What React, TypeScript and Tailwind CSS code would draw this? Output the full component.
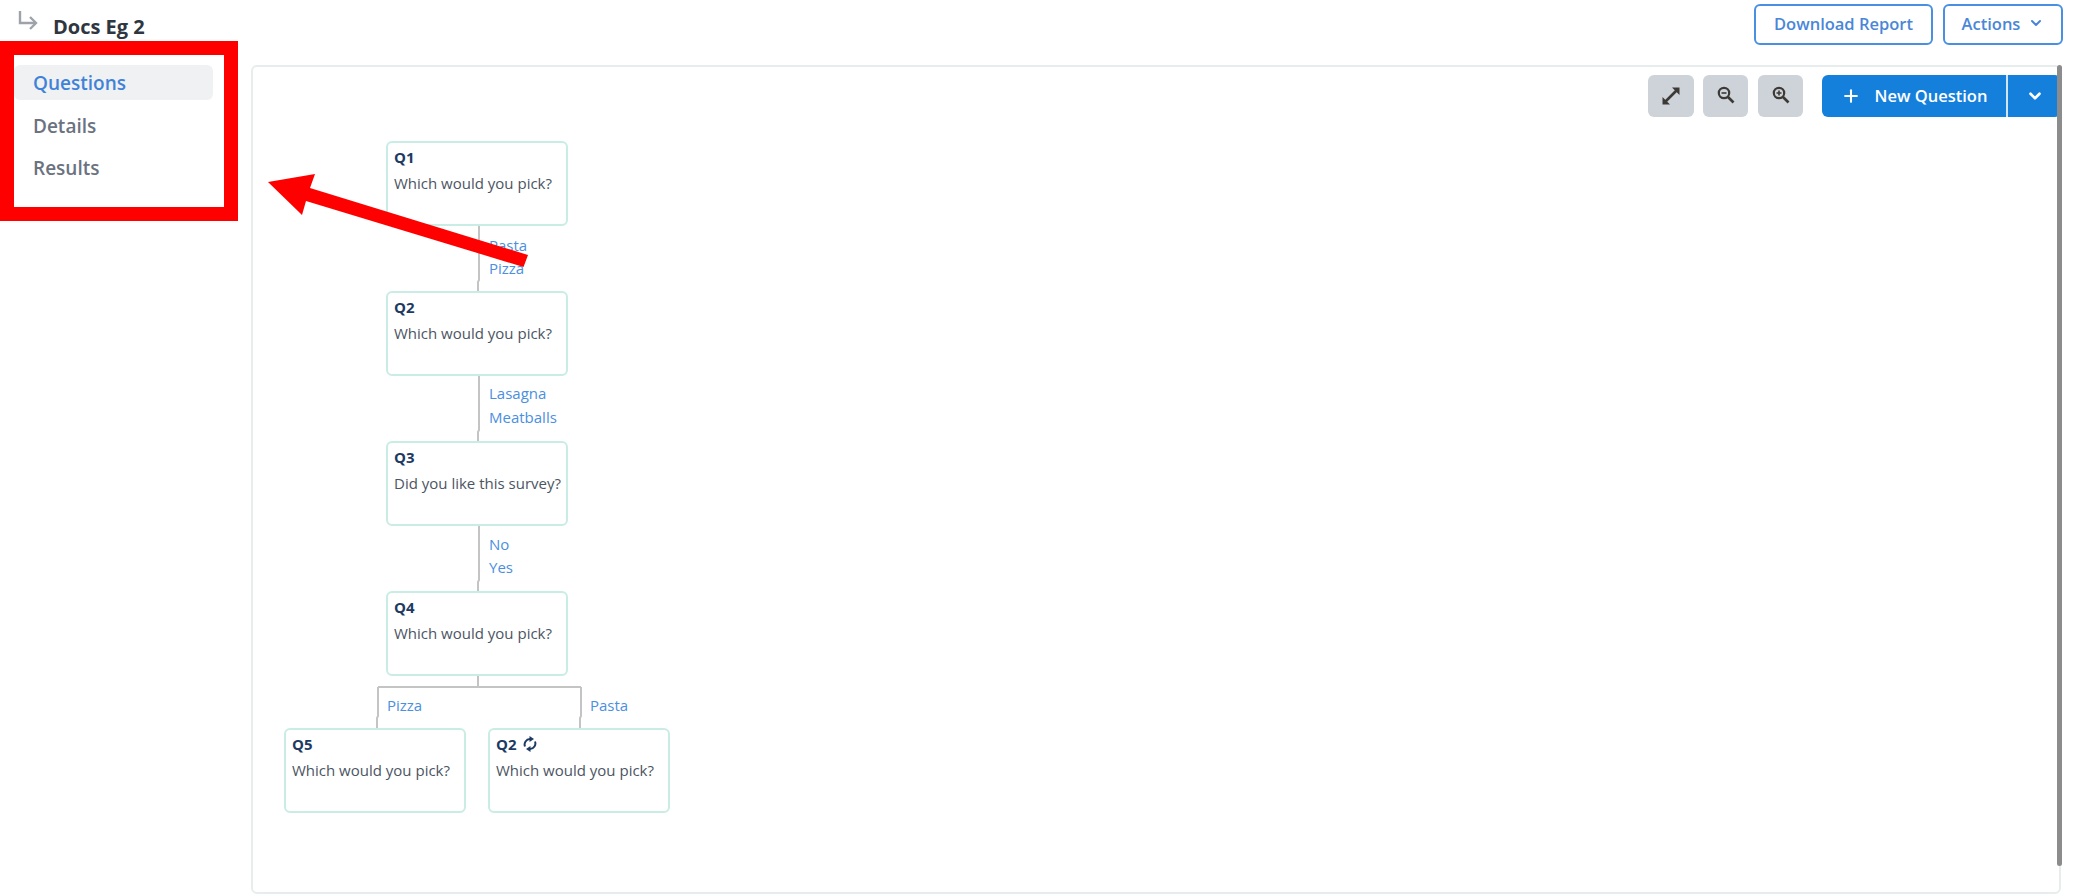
import { ChevronDown, Plus } from 'lucide-react';

type NodeProps = {
  label: string;
  text: string;
  className: string;
  loop?: boolean;
};

const FlowNode = ({ label, text, className, loop }: NodeProps) => (
  <div className={`absolute w-[182px] h-[85px] bg-white border-2 border-[#c9ece4] rounded-md pl-[6px] pt-[2px] ${className}`}>
    <div className="flex items-center gap-[6px] text-[15px] leading-[24px] font-bold text-[#1d3a63]">
      {label}
      {loop && (
        <svg viewBox="0 0 14 16" className="w-[14px] h-[16px]" fill="none" stroke="#1d3a63" strokeWidth="2">
          <path d="M2 10.5a5.5 5.5 0 0 1 5-7.5" />
          <path d="M12 5.5a5.5 5.5 0 0 1-5 7.5" />
          <path d="M6.5 0l4.5 3-4.5 3z" fill="#1d3a63" stroke="none" />
          <path d="M7.5 10l-4.5 3 4.5 3z" fill="#1d3a63" stroke="none" />
        </svg>
      )}
    </div>
    <div className="mt-[3px] text-[15px] leading-[22px] text-[#4b5563] whitespace-nowrap">{text}</div>
  </div>
);

const EdgeLabel = ({ text, className }: { text: string; className: string }) => (
  <span className={`absolute text-[15px] leading-[20px] text-[#4a8fe0] ${className}`}>{text}</span>
);

const ZoomIcon = ({ plus }: { plus?: boolean }) => (
  <svg viewBox="0 0 18 18" className="w-[18px] h-[18px] mb-[3px]" fill="none" stroke="#3d3a36">
    <circle cx="7" cy="7" r="5.2" strokeWidth="2.2" />
    <path d="M11 11l5.5 5.5" strokeWidth="2.6" />
    <path d={plus ? 'M4.5 7h5M7 4.5v5' : 'M4.5 7h5'} strokeWidth="1.6" />
  </svg>
);

const App = () => {
  return (
    <div className="relative w-[2074px] h-[896px] bg-white overflow-hidden font-['Open_Sans',sans-serif]">
      {/* Header */}
      <div className="flex items-start justify-between h-[65px] pl-[18px] pr-[11px] pt-[4px]">
        <div className="flex items-start gap-[15px]">
          <svg viewBox="0 0 20 22" className="w-[20px] h-[22px] mt-[6px]" fill="none" stroke="#9ea3ab" strokeWidth="2.4">
            <path d="M2 1v12h16" />
            <path d="M12 7l6 6-6 6" />
          </svg>
          <span className="mt-[7px] text-[20px] leading-[32px] font-bold text-[#2f3640]">Docs Eg 2</span>
        </div>
        <div className="flex gap-[10px]">
          <button className="w-[179px] h-[41px] border-2 border-[#4a90e2] rounded-md text-[16.5px] font-semibold text-[#4a86d8]">
            Download Report
          </button>
          <button className="flex items-center justify-center gap-[8px] w-[120px] h-[41px] border-2 border-[#4a90e2] rounded-md text-[16.5px] font-semibold text-[#4a86d8]">
            Actions
            <ChevronDown size={16} strokeWidth={3} className="mb-[4px]" />
          </button>
        </div>
      </div>

      <div className="flex pl-[14px] pr-[13px] gap-[38px]">
        {/* Sidebar */}
        <div className="w-[199px] flex flex-col">
          <div className="h-[35px] bg-[#f0f1f2] rounded-md pl-[19px] pt-[1px] text-[19px] leading-[35px] font-semibold text-[#3f83d8]">
            Questions
          </div>
          <div className="h-[42px] pl-[19px] pt-[9px] text-[19px] leading-[35px] font-semibold text-[#6b7280]">Details</div>
          <div className="h-[42px] pl-[19px] pt-[9px] text-[19px] leading-[35px] font-semibold text-[#6b7280]">Results</div>
        </div>

        {/* Panel */}
        <div className="relative flex-1 h-[829px] border-2 border-[#e7ecec] rounded-md">
          <div className="flex justify-end items-center pt-[8px] -mr-[2px]">
            <button className="flex items-center justify-center w-[46px] h-[42px] bg-[#ced3d9] rounded-md">
              <svg viewBox="0 0 20 20" className="w-[20px] h-[20px]" fill="#3d3a36" stroke="#3d3a36">
                <path d="M4.5 15.5l11-11" strokeWidth="2.6" />
                <path d="M11 1.5h7.5V9z" stroke="none" />
                <path d="M9 18.5H1.5V11z" stroke="none" />
              </svg>
            </button>
            <button className="flex items-center justify-center w-[45px] h-[42px] ml-[9px] bg-[#ced3d9] rounded-md">
              <ZoomIcon />
            </button>
            <button className="flex items-center justify-center w-[45px] h-[42px] ml-[10px] bg-[#ced3d9] rounded-md">
              <ZoomIcon plus />
            </button>
            <div className="flex h-[42px] ml-[19px] bg-[#1580db] rounded-md text-white">
              <div className="flex items-center justify-center gap-[14px] w-[186px] border-r-2 border-[#cfe6f8] text-[16.5px] font-semibold">
                <Plus size={20} strokeWidth={2.5} />
                New Question
              </div>
              <div className="flex items-center justify-center w-[53px]">
                <ChevronDown size={18} strokeWidth={3.5} />
              </div>
            </div>
          </div>

          {/* Connectors */}
          <svg className="absolute left-0 top-0 w-[600px] h-[800px]" fill="none" stroke="#c4c4c4" strokeWidth="2">
            <path d="M226 159v54l-1 2v10" />
            <path d="M226 309v54l-1 2v9" />
            <path d="M226 458v55l-1 2v10" />
            <path d="M225 608v12M125 620h203M125 620v29l-1 2v10M328 620v29l-1 2v10" />
          </svg>

          <FlowNode label="Q1" text="Which would you pick?" className="left-[133px] top-[74px]" />
          <FlowNode label="Q2" text="Which would you pick?" className="left-[133px] top-[224px]" />
          <FlowNode label="Q3" text="Did you like this survey?" className="left-[133px] top-[374px]" />
          <FlowNode label="Q4" text="Which would you pick?" className="left-[133px] top-[524px]" />
          <FlowNode label="Q5" text="Which would you pick?" className="left-[31px] top-[661px]" />
          <FlowNode label="Q2" loop text="Which would you pick?" className="left-[235px] top-[661px]" />

          <EdgeLabel text="Pasta" className="left-[236px] top-[168px]" />
          <EdgeLabel text="Pizza" className="left-[236px] top-[191px]" />
          <EdgeLabel text="Lasagna" className="left-[236px] top-[316px]" />
          <EdgeLabel text="Meatballs" className="left-[236px] top-[340px]" />
          <EdgeLabel text="No" className="left-[236px] top-[467px]" />
          <EdgeLabel text="Yes" className="left-[236px] top-[490px]" />
          <EdgeLabel text="Pizza" className="left-[134px] top-[628px]" />
          <EdgeLabel text="Pasta" className="left-[337px] top-[628px]" />

          {/* Scrollbar */}
          <div className="absolute right-[-3px] top-[-2px] w-[5px] h-[801px] bg-[#8c8c8c] rounded-sm" />
        </div>
      </div>

      {/* Annotation */}
      <div className="absolute left-0 top-[41px] w-[238px] h-[180px] border-[14px] border-[#ff0000]" />
      <svg className="absolute left-0 top-0 w-[600px] h-[300px]" fill="#ff0000">
        <path d="M268 182l47-8-5 14 218 67-4.5 12-217.5-66-4 14z" />
      </svg>
    </div>
  );
};

export default App;
